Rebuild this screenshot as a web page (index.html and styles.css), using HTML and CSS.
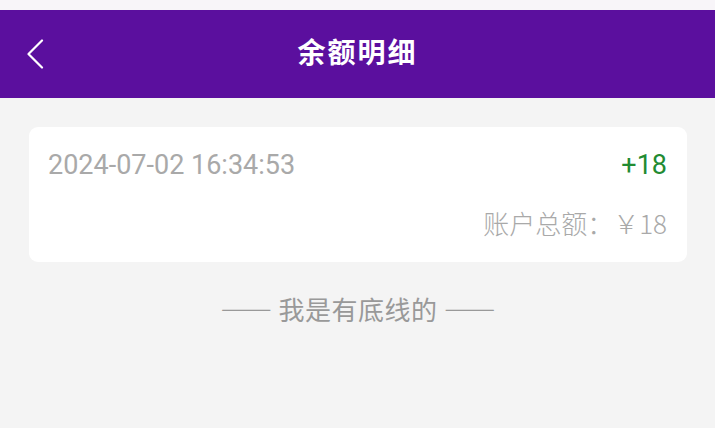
FILE: index.html
```html
<!DOCTYPE html>
<html lang="zh-CN">
<head>
<meta charset="utf-8">
<title>余额明细</title>
<link rel="stylesheet" href="styles.css">
</head>
<body>
<div class="statusbar"></div>
<header class="navbar">
  <button class="back" aria-label="返回">
    <svg width="18" height="30" viewBox="0 0 18 30"><path d="M16 1.5 L2.5 15 L16 28.5" fill="none" stroke="#fff" stroke-width="2.2" stroke-linecap="round" stroke-linejoin="round"/></svg>
  </button>
  <h1 class="title">余额明细</h1>
</header>
<main class="content">
  <section class="card">
    <div class="row">
      <span class="time">2024-07-02 16:34:53</span>
      <span class="amount">+18</span>
    </div>
    <div class="row row-end">
      <span class="total">账户总额：￥18</span>
    </div>
  </section>
  <p class="bottom-line"><span class="dash">——</span> 我是有底线的 <span class="dash">——</span></p>
</main>
</body>
</html>
```

FILE: styles.css
```css
html, body {
  margin: 0;
  padding: 0;
}
body {
  background: #f4f4f4;
  font-family: Roboto, "Noto Sans CJK SC", sans-serif;
  width: 715px;
  height: 428px;
  overflow: hidden;
}
.statusbar {
  height: 10px;
  background: #f8f5f9;
}
.navbar {
  height: 88px;
  background: #5b0f9e;
  display: flex;
  align-items: center;
  justify-content: center;
  position: relative;
}
.back {
  position: absolute;
  left: 26px;
  top: 29px;
  padding: 0;
  border: 0;
  background: none;
  display: flex;
}
.title {
  margin: 0;
  color: #fff;
  font-family: "Noto Sans CJK SC", sans-serif;
  font-weight: 700;
  font-size: 28px;
  letter-spacing: 2px;
  line-height: 1;
  margin-top: -6px;
}
.content {
  padding: 29px 28px 0 29px;
}
.card {
  background: #fff;
  border-radius: 9px;
  height: 135px;
  box-sizing: border-box;
  padding: 20px 20px 0 19px;
  display: flex;
  flex-direction: column;
  gap: 22px;
}
.row {
  display: flex;
  justify-content: space-between;
  align-items: center;
  height: 36px;
  line-height: 36px;
}
.row-end {
  justify-content: flex-end;
}
.time {
  color: #a9a9a9;
  font-size: 27px;
}
.amount {
  color: #228b32;
  font-size: 27px;
}
.total {
  color: #a9a9a9;
  font-size: 26px;
  font-family: "Noto Sans CJK SC", sans-serif;
  font-weight: 300;
}
.bottom-line {
  margin: 30px 0 0;
  text-align: center;
  color: #999;
  font-family: "Noto Sans CJK SC", sans-serif;
  font-size: 26px;
  letter-spacing: 0.5px;
  line-height: 34px;
}
.dash {
  font-weight: 700;
  letter-spacing: 0;
}
```
